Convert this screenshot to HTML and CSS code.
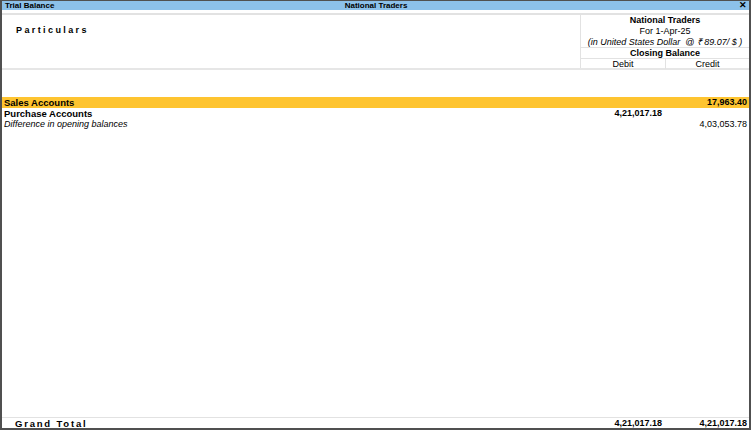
FILE: index.html
```html
<!DOCTYPE html>
<html lang="en">
<head>
    <meta charset="UTF-8">
    <title>Trial Balance</title>
    <link rel="stylesheet" href="styles.css">
</head>
<body>
    <div class="window">
        <div class="titlebar">
            <span class="title-left">Trial Balance</span>
            <span class="title-center">National Traders</span>
            <span class="title-close">&#x2715;</span>
        </div>

        <!-- Report header -->
        <div class="report-head">
            <div class="particulars">Particulars</div>
            <div class="period-col">
                <div class="line bold">National Traders</div>
                <div class="line">For 1-Apr-25</div>
                <div class="line short italic">(in United States Dollar &nbsp;@ &#8377; 89.07/ $ )</div>
                <div class="line short bold sep">Closing Balance</div>
                <div class="dc sep">
                    <div>Debit</div>
                    <div class="credit-head">Credit</div>
                </div>
            </div>
        </div>

        <!-- Ledger rows -->
        <div class="report-body">
            <div class="row bold highlight">
                <div class="name">Sales Accounts</div>
                <div class="amt"></div>
                <div class="amt">17,963.40</div>
            </div>
            <div class="row bold">
                <div class="name">Purchase Accounts</div>
                <div class="amt">4,21,017.18</div>
                <div class="amt"></div>
            </div>
            <div class="row">
                <div class="name italic">Difference in opening balances</div>
                <div class="amt"></div>
                <div class="amt">4,03,053.78</div>
            </div>
        </div>

        <div class="report-foot row bold">
            <div class="name spaced">Grand Total</div>
            <div class="amt">4,21,017.18</div>
            <div class="amt">4,21,017.18</div>
        </div>
    </div>
</body>
</html>
```

FILE: styles.css
```css
html, body {
    margin: 0;
    padding: 0;
    background-color: #fff;
}

body {
    font-family: "Liberation Sans", Arial, sans-serif;
    font-size: 9px;
    color: #000;
}

.window {
    box-sizing: border-box;
    width: 751px;
    height: 430px;
    border: 2px solid #505050;
    border-top: 1px solid #505050;
    display: flex;
    flex-direction: column;
}

.titlebar {
    height: 9px;
    background-color: #8cc1ea;
    display: grid;
    grid-template-columns: 1fr auto 1fr;
    align-items: center;
    font-size: 8px;
    font-weight: bold;
    line-height: 9px;
    padding: 0 2px 0 3px;
}

.title-center {
    text-align: center;
}

.title-close {
    justify-self: end;
    font-size: 9px;
    font-weight: bold;
}

.report-head {
    margin-top: 3px;
    border-top: 2px solid #e2e2e2;
    border-bottom: 2px solid #e6e6e6;
    display: flex;
}

.particulars {
    flex: 1;
    font-weight: bold;
    font-size: 9px;
    letter-spacing: 2.4px;
    padding: 10px 0 0 14px;
}

.period-col {
    width: 168px;
    border-left: 1px solid #e2e2e2;
    text-align: center;
}

.line {
    height: 11px;
    line-height: 11px;
}

.line.short {
    height: 10px;
    line-height: 10px;
}

.sep {
    border-top: 1px solid #e2e2e2;
}

.dc {
    display: grid;
    grid-template-columns: 84px 1fr;
    height: 9px;
    line-height: 10px;
}

.credit-head {
    border-left: 1px solid #e2e2e2;
}

.bold {
    font-weight: bold;
}

.italic {
    font-style: italic;
}

.report-body {
    flex: 1;
    padding-top: 27px;
}

.row {
    display: grid;
    grid-template-columns: 1fr 85px 84px;
    height: 11px;
    line-height: 11px;
}

.row .name {
    padding-left: 2px;
}

.row.bold .name {
    font-size: 9.5px;
}

.row .amt {
    text-align: right;
    padding-right: 2px;
}

.row .amt:nth-child(2) {
    padding-right: 3px;
}

.highlight {
    background-color: #fec430;
}

.report-foot {
    border-top: 1px solid #e2e2e2;
    height: 10px;
    line-height: 11px;
}

.report-foot .spaced {
    padding-left: 13px;
    letter-spacing: 1.8px;
    font-size: 9px;
}
```
